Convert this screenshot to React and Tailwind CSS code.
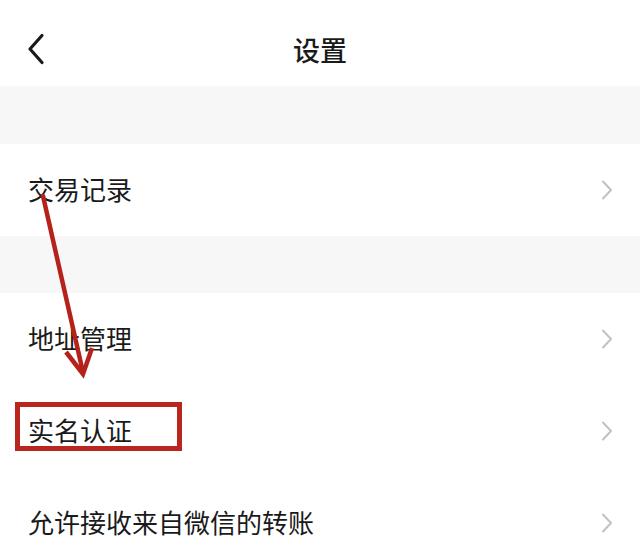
import React from 'react';

const Chevron = () => (
  <svg width="12" height="20" viewBox="0 0 12 20" fill="none">
    <path d="M2 1.5 L10 10 L2 18.5" stroke="#c2c2c2" strokeWidth="2" strokeLinecap="round" strokeLinejoin="round" />
  </svg>
);

const Row = ({ label }) => (
  <div className="h-[92px] flex items-center justify-between pl-[28px] pr-[27px] bg-white">
    <span className="text-[26px] text-[#1a1a1a] leading-none -mt-[3px]">{label}</span>
    <Chevron />
  </div>
);

const App = () => {
  return (
    <div
      className="relative w-[640px] h-[544px] overflow-hidden bg-white"
      style={{ fontFamily: '"Noto Sans CJK SC", "Noto Sans", sans-serif' }}
    >
      {/* Header */}
      <div className="h-[86px] flex items-center relative">
        <div className="pl-[26px] pt-[12px]">
          <svg width="20" height="32" viewBox="0 0 20 32" fill="none">
            <path d="M16 2.5 L4 16 L16 29.5" stroke="#1a1a1a" strokeWidth="3.2" strokeLinecap="round" strokeLinejoin="round" />
          </svg>
        </div>
        <h1 className="absolute inset-x-0 top-[36px] text-center text-[27px] font-medium text-[#1a1a1a] leading-none pointer-events-none">
          设置
        </h1>
      </div>

      <div className="h-[58px] bg-[#f7f7f7]" />
      <Row label="交易记录" />
      <div className="h-[57px] bg-[#f7f7f7]" />
      <Row label="地址管理" />
      <Row label="实名认证" />
      <Row label="允许接收来自微信的转账" />

      {/* Annotations */}
      <svg className="absolute inset-0 pointer-events-none" width="640" height="544" viewBox="0 0 640 544">
        <line x1="43" y1="196" x2="82" y2="368" stroke="#b5221a" strokeWidth="4.5" strokeLinecap="round" />
        <path d="M66 352 L83 374 L92 348" stroke="#b5221a" strokeWidth="4.5" fill="none" strokeLinejoin="miter" />
        <rect x="17.5" y="404.5" width="162" height="44" stroke="#b8261e" strokeWidth="5" fill="none" />
      </svg>
    </div>
  );
};

export default App;
